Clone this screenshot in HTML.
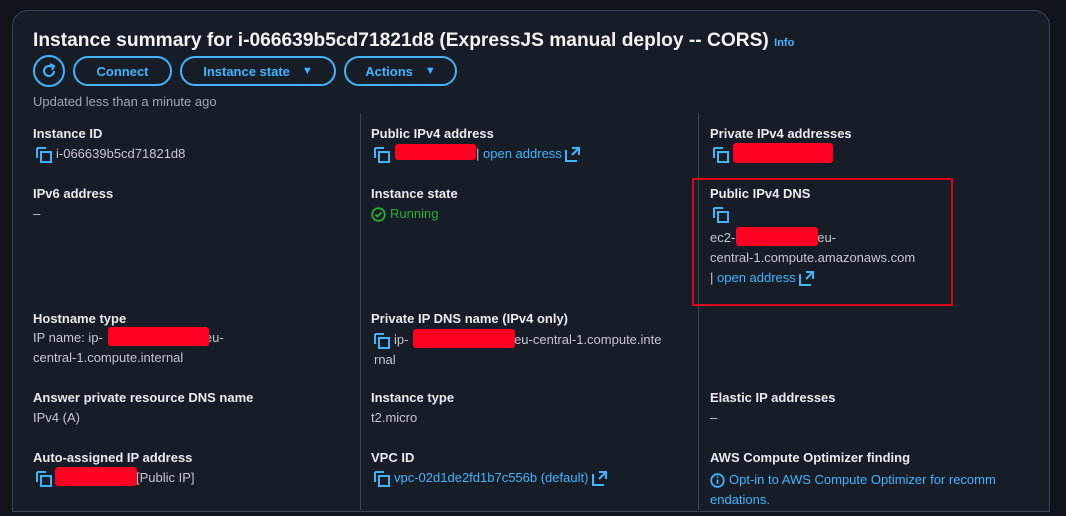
<!DOCTYPE html>
<html><head><meta charset="utf-8"><style>
body{margin:0;width:1066px;height:516px;background:#0f141a;overflow:hidden;font-family:"Liberation Sans",sans-serif;}
.card{position:absolute;left:12px;top:10px;width:1036px;height:500px;background:#161d26;border:1px solid #3c4452;border-radius:16px 16px 0 0;}
.a{position:absolute;white-space:nowrap;}
.t{font-size:19.2px;font-weight:bold;color:#f2f3f3;}
.l{font-size:13px;font-weight:bold;color:#e9ebed;}
.v{font-size:13px;color:#c6c6cd;}
.k{color:#42b4ff;}
.btn{position:absolute;top:56px;height:30px;border:2px solid #42b4ff;border-radius:16px;box-sizing:border-box;color:#42b4ff;font-size:13px;font-weight:bold;display:flex;align-items:center;justify-content:center;gap:12px}
.div{position:absolute;width:1px;background:#3c4452;}
.red{position:absolute;background:#ff0022;border-radius:3px;}
.cp{display:inline-block;vertical-align:middle;margin-right:4px}
</style></head><body>
<div class="card"></div>
<div class="a t" style="left:33px;top:30px">Instance summary for i-066639b5cd71821d8 (ExpressJS manual deploy -- CORS) <span style="font-size:11px;color:#42b4ff">Info</span></div>
<div class="btn" style="left:33px;width:32px;border-radius:50%;height:32px;top:55px"><svg width="18" height="18" viewBox="0 0 18 18"><path d="M14 9a5 5 0 1 1-2-4" fill="none" stroke="#42b4ff" stroke-width="2"/><path d="M10 2l4 2-2 4" fill="none" stroke="#42b4ff" stroke-width="2"/></svg></div>
<div class="btn" style="left:73px;width:99px">Connect</div>
<div class="btn" style="left:180px;width:156px">Instance state <span style="font-size:11px">▼</span></div>
<div class="btn" style="left:344px;width:113px">Actions <span style="font-size:11px">▼</span></div>
<div class="a v" style="left:33px;top:94px;color:#9ba7b6">Updated less than a minute ago</div>
<div class="div" style="left:360px;top:113px;height:397px"></div>
<div class="div" style="left:698px;top:113px;height:397px"></div>
<div class="a" style="left:692px;top:178px;width:261px;height:128px;border:2px solid #e0001c;box-sizing:border-box"></div>

<svg width="0" height="0" style="position:absolute"><defs><g id="c"><path d="M1 1h9M1 1v10" stroke="#42b4ff" stroke-width="2" fill="none"/><rect x="5" y="5" width="10" height="10" stroke="#42b4ff" stroke-width="2" fill="none"/></g><g id="e"><path d="M1 3v11h11M7 1h7v7M14 1L7 8" stroke="#42b4ff" stroke-width="2" fill="none"/></g></defs></svg>

<div class="a l" style="left:33px;top:126px">Instance ID</div>
<div class="a v" style="left:36px;top:146px"><svg class="cp" width="16" height="16"><use href="#c"/></svg>i-066639b5cd71821d8</div>
<div class="a l" style="left:33px;top:186px">IPv6 address</div>
<div class="a v" style="left:33px;top:206px">–</div>
<div class="a l" style="left:33px;top:311px">Hostname type</div>
<div class="a v" style="left:33px;top:328px;line-height:20px">IP name: ip-<span style="display:inline-block;width:102px"></span>eu-<br>central-1.compute.internal</div>
<div class="red" style="left:108px;top:327px;width:101px;height:19px"></div>
<div class="a l" style="left:33px;top:390px">Answer private resource DNS name</div>
<div class="a v" style="left:33px;top:410px">IPv4 (A)</div>
<div class="a l" style="left:33px;top:450px">Auto-assigned IP address</div>
<div class="a v" style="left:36px;top:470px"><svg class="cp" width="16" height="16"><use href="#c"/></svg><span style="display:inline-block;width:80px"></span>[Public IP]</div>
<div class="red" style="left:55px;top:467px;width:82px;height:19px"></div>

<div class="a l" style="left:371px;top:126px">Public IPv4 address</div>
<div class="a v" style="left:374px;top:146px"><svg class="cp" width="16" height="16"><use href="#c"/></svg><span style="display:inline-block;width:82px"></span><span style="color:#c6c6cd">|</span> <span class="k">open address</span> <svg class="cp" width="16" height="16"><use href="#e"/></svg></div>
<div class="red" style="left:395px;top:144px;width:81px;height:16px"></div>
<div class="a l" style="left:371px;top:186px">Instance state</div>
<div class="a v" style="left:371px;top:206px;color:#29ad32"><svg class="cp" width="15" height="15" viewBox="0 0 15 15"><circle cx="7.5" cy="7.5" r="6.3" fill="none" stroke="#29ad32" stroke-width="1.8"/><path d="M4.5 7.5l2 2 4-4" fill="none" stroke="#29ad32" stroke-width="1.8"/></svg>Running</div>
<div class="a l" style="left:371px;top:311px">Private IP DNS name (IPv4 only)</div>
<div class="a v" style="left:374px;top:330px;line-height:20px"><svg class="cp" width="16" height="16"><use href="#c"/></svg>ip-<span style="display:inline-block;width:102px"></span>.eu-central-1.compute.inte<br>rnal</div>
<div class="red" style="left:413px;top:329px;width:102px;height:19px"></div>
<div class="a l" style="left:371px;top:390px">Instance type</div>
<div class="a v" style="left:371px;top:410px">t2.micro</div>
<div class="a l" style="left:371px;top:450px">VPC ID</div>
<div class="a v" style="left:374px;top:470px"><svg class="cp" width="16" height="16"><use href="#c"/></svg><span class="k">vpc-02d1de2fd1b7c556b (default)</span> <svg class="cp" width="16" height="16"><use href="#e"/></svg></div>

<div class="a l" style="left:710px;top:126px">Private IPv4 addresses</div>
<div class="a v" style="left:713px;top:146px"><svg class="cp" width="16" height="16"><use href="#c"/></svg></div>
<div class="red" style="left:733px;top:143px;width:100px;height:20px"></div>
<div class="a l" style="left:710px;top:186px">Public IPv4 DNS</div>
<div class="a v" style="left:713px;top:206px"><svg class="cp" width="16" height="16"><use href="#c"/></svg></div>
<div class="a v" style="left:710px;top:228px;line-height:20px">ec2-<span style="display:inline-block;width:82px"></span>eu-<br>central-1.compute.amazonaws.com<br>| <span class="k">open address</span> <svg class="cp" width="16" height="16"><use href="#e"/></svg></div>
<div class="red" style="left:736px;top:227px;width:82px;height:19px"></div>
<div class="a l" style="left:710px;top:390px">Elastic IP addresses</div>
<div class="a v" style="left:710px;top:410px">–</div>
<div class="a l" style="left:710px;top:450px">AWS Compute Optimizer finding</div>
<div class="a v k" style="left:710px;top:470px;line-height:20px"><svg class="cp" width="15" height="15" viewBox="0 0 15 15"><circle cx="7.5" cy="7.5" r="6.3" fill="none" stroke="#42b4ff" stroke-width="1.8"/><path d="M7.5 6.5v4.5M7.5 3.5v1.5" stroke="#42b4ff" stroke-width="1.8"/></svg>Opt-in to AWS Compute Optimizer for recomm<br>endations.</div>
</body></html>
